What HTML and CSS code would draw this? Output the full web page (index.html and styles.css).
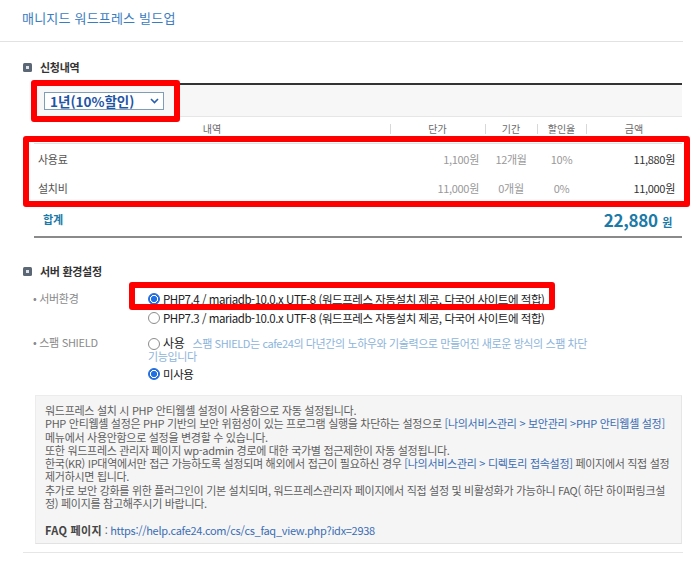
FILE: index.html
```html
<!DOCTYPE html>
<html lang="ko">
<head>
<meta charset="utf-8">
<title>매니지드 워드프레스 빌드업</title>
<link rel="stylesheet" href="styles.css">
</head>
<body>
<div class="page">
  <div class="title">매니지드 워드프레스 빌드업</div>

  <h2 class="sec"><svg class="ico" width="9" height="9" viewBox="0 0 9 9"><rect width="9" height="9" rx="1.5" fill="#5b6775"/><rect x="3" y="3" width="3" height="3" fill="#dfe4ea"/></svg>신청내역</h2>

  <div class="tbl">
    <div class="sel-row">
      <div class="select">1년(10%할인)<svg class="chev" width="9" height="6" viewBox="0 0 9 6"><polyline points="1,1 4.5,4.5 8,1" fill="none" stroke="#2a5fae" stroke-width="1.6"/></svg></div>
    </div>
    <div class="row head">
      <span>내역</span><span class="sep">단가</span><span class="sep">기간</span><span class="sep">할인율</span><span class="sep">금액</span>
    </div>
    <div class="row data">
      <span class="name">사용료</span><span class="price">1,100원</span><span class="mid">12개월</span><span class="mid">10%</span><span class="amt">11,880원</span>
    </div>
    <div class="row data">
      <span class="name">설치비</span><span class="price">11,000원</span><span class="mid">0개월</span><span class="mid">0%</span><span class="amt">11,000원</span>
    </div>
    <div class="total">
      <span class="sum-l">합계</span><span class="sum-v">22,880 <small>원</small></span>
    </div>
  </div>

  <h2 class="sec sec2"><svg class="ico" width="9" height="9" viewBox="0 0 9 9"><rect width="9" height="9" rx="1.5" fill="#5b6775"/><rect x="3" y="3" width="3" height="3" fill="#dfe4ea"/></svg>서버 환경설정</h2>

  <div class="form">
    <div class="label">• 서버환경</div>
    <div class="val">
      <div class="opt"><span class="radio on"></span>PHP7.4 / mariadb-10.0.x UTF-8 (워드프레스 자동설치 제공, 다국어 사이트에 적합)</div>
      <div class="opt"><span class="radio"></span>PHP7.3 / mariadb-10.0.x UTF-8 (워드프레스 자동설치 제공, 다국어 사이트에 적합)</div>
    </div>
    <div class="label label2">• 스팸 SHIELD</div>
    <div class="val">
      <div class="spam"><span class="radio"></span><span class="rl">사용</span><span class="desc">스팸 SHIELD는 cafe24의 다년간의 노하우와 기술력으로 만들어진 새로운 방식의 스팸 차단<br>기능입니다</span></div>
      <div class="opt opt-last"><span class="radio on"></span>미사용</div>
    </div>
  </div>

  <div class="info">
    워드프레스 설치 시 PHP 안티웹셸 설정이 사용함으로 자동 설정됩니다.<br>
    PHP 안티웹셸 설정은 PHP 기반의 보안 위험성이 있는 프로그램 실행을 차단하는 설정으로 <span class="lnk">[나의서비스관리 &gt; 보안관리 &gt;PHP 안티웹셸 설정]</span><br>
    메뉴에서 사용안함으로 설정을 변경할 수 있습니다.<br>
    또한 워드프레스 관리자 페이지 wp-admin 경로에 대한 국가별 접근제한이 자동 설정됩니다.<br>
    한국(KR) IP대역에서만 접근 가능하도록 설정되며 해외에서 접근이 필요하신 경우 <span class="lnk">[나의서비스관리 &gt; 디렉토리 접속설정]</span> 페이지에서 직접 설정<br>
    제거하시면 됩니다.<br>
    추가로 보안 강화를 위한 플러그인이 기본 설치되며, 워드프레스관리자 페이지에서 직접 설정 및 비활성화가 가능하니 FAQ( 하단 하이퍼링크설<br>
    정) 페이지를 참고해주시기 바랍니다.<br>
    <br>
    <b class="faq">FAQ 페이지</b> : <span class="lnk">https://help.cafe24.com/cs/cs_faq_view.php?idx=2938</span>
  </div>

  <div class="endline"></div>

  <div class="mark m1"></div>
  <div class="mark m2"></div>
  <div class="mark m3"></div>
</div>
</body>
</html>
```

FILE: styles.css
```css
html, body {
  margin: 0;
  padding: 0;
  background: #fff;
}

body {
  font-family: "Noto Sans CJK KR", "Noto Sans", sans-serif;
  color: #333;
}

.page {
  position: relative;
  width: 700px;
  height: 561px;
  overflow: hidden;
}

.title {
  width: 661px;
  height: 41px;
  padding-left: 22px;
  line-height: 36px;
  font-size: 13px;
  letter-spacing: 0.2px;
  color: #3a7cc0;
  border-bottom: 1px solid #e2e2e2;
}

.sec {
  display: flex;
  align-items: center;
  gap: 8px;
  margin: 16px 0 0 0;
  padding-left: 23px;
  height: 18px;
  font-size: 11px;
  font-weight: bold;
  color: #333;
  letter-spacing: -0.3px;
}

.sec2 {
  margin-top: 24px;
}

.ico {
  display: block;
  flex: none;
}

.tbl {
  margin: 7px 0 0 34px;
  width: 648px;
  border-top: 2px solid #333;
}

.sel-row {
  background: #f7f7f7;
  border-bottom: 1px solid #e6e6e6;
  padding: 7px 0 0 10px;
  box-sizing: border-box;
  height: 32px;
}

.select {
  display: flex;
  align-items: center;
  justify-content: space-between;
  width: 120px;
  height: 18px;
  box-sizing: border-box;
  padding: 0 4px 0 5px;
  border: 1px solid #7f9db9;
  background: #fff;
  font-size: 13.5px;
  font-weight: bold;
  color: #1f55a5;
  letter-spacing: 0;
  line-height: 16px;
}

.chev {
  display: block;
}

.row {
  display: grid;
  grid-template-columns: 356px 95px 52px 49px 96px;
  align-items: center;
}

.head {
  height: 27px;
  padding-bottom: 3px;
  box-sizing: border-box;
  border-bottom: 1px solid #e3e3e3;
  font-size: 10px;
  color: #6a6a6a;
  text-align: center;
}

.head span {
  line-height: 24px;
}

.head .sep {
  background: linear-gradient(#d8d8d8, #d8d8d8) left center / 1px 10px no-repeat;
}

.data {
  height: 29px;
  font-size: 11px;
  letter-spacing: -0.3px;
}

.data .name {
  padding-left: 4px;
  color: #555;
}

.data .price {
  text-align: right;
  padding-right: 6px;
  color: #999;
}

.data .mid {
  text-align: center;
  color: #999;
}

.data .amt {
  text-align: right;
  padding-right: 7px;
  color: #333;
}

.total {
  display: flex;
  justify-content: space-between;
  align-items: center;
  height: 34px;
  border-bottom: 2px solid #8a8a8a;
  padding: 0 10px 0 9px;
}

.sum-l {
  font-size: 11px;
  font-weight: bold;
  color: #1b7aa7;
}

.sum-v {
  font-size: 17px;
  font-weight: bold;
  color: #1b7aa7;
  letter-spacing: -0.3px;
}

.sum-v small {
  font-size: 11px;
}

.form {
  display: grid;
  grid-template-columns: 115px 1fr;
  row-gap: 9px;
  padding-left: 33px;
  margin-top: 9px;
}

.label {
  font-size: 11px;
  line-height: 18px;
  color: #8a8a8a;
  letter-spacing: -0.3px;
}

.label2 {
  line-height: 13px;
}

.opt {
  display: flex;
  align-items: center;
  gap: 3px;
  height: 19px;
  font-size: 11.5px;
  color: #222;
  letter-spacing: -0.45px;
}

.opt-last {
  margin-top: 1px;
}

.radio {
  display: inline-block;
  flex: none;
  width: 12px;
  height: 12px;
  box-sizing: border-box;
  border-radius: 50%;
  border: 1px solid #8c8c8c;
  background: #fff;
}

.radio.on {
  border-color: #2a6bd3;
  background: radial-gradient(circle, #1f6fe5 0 2.8px, #fff 3.3px 3.8px, #1f6fe5 4.3px);
}

.spam {
  line-height: 13px;
  font-size: 11px;
}

.spam .radio {
  vertical-align: -2px;
}

.spam .rl {
  font-size: 12px;
  color: #222;
  margin-left: 3px;
  margin-right: 8px;
  letter-spacing: -0.3px;
}

.desc {
  color: #8cb4db;
  letter-spacing: -0.4px;
}

.info {
  margin: 12px 0 0 35px;
  width: 647px;
  box-sizing: border-box;
  padding: 8px 0 6px 9px;
  background: #f5f5f5;
  border: 1px solid #ececec;
  border-bottom-color: #e2e2e2;
  border-right-color: #e6e6e6;
  font-size: 11px;
  line-height: 13.3px;
  color: #5e5e5e;
  letter-spacing: -0.3px;
  white-space: nowrap;
}

.lnk {
  color: #3a6db4;
}

.faq {
  color: #444;
  letter-spacing: 0.3px;
}

.endline {
  margin: 8px 0 0 23px;
  width: 660px;
  height: 1px;
  background: #e6e6e6;
}

.mark {
  position: absolute;
  box-sizing: border-box;
  border: 6px solid #ff0000;
  border-radius: 3px;
}

.m1 {
  left: 31px;
  top: 80px;
  width: 149px;
  height: 42px;
}

.m2 {
  left: 23px;
  top: 136px;
  width: 667px;
  height: 71px;
}

.m3 {
  left: 129px;
  top: 282px;
  width: 426px;
  height: 28px;
}
```
